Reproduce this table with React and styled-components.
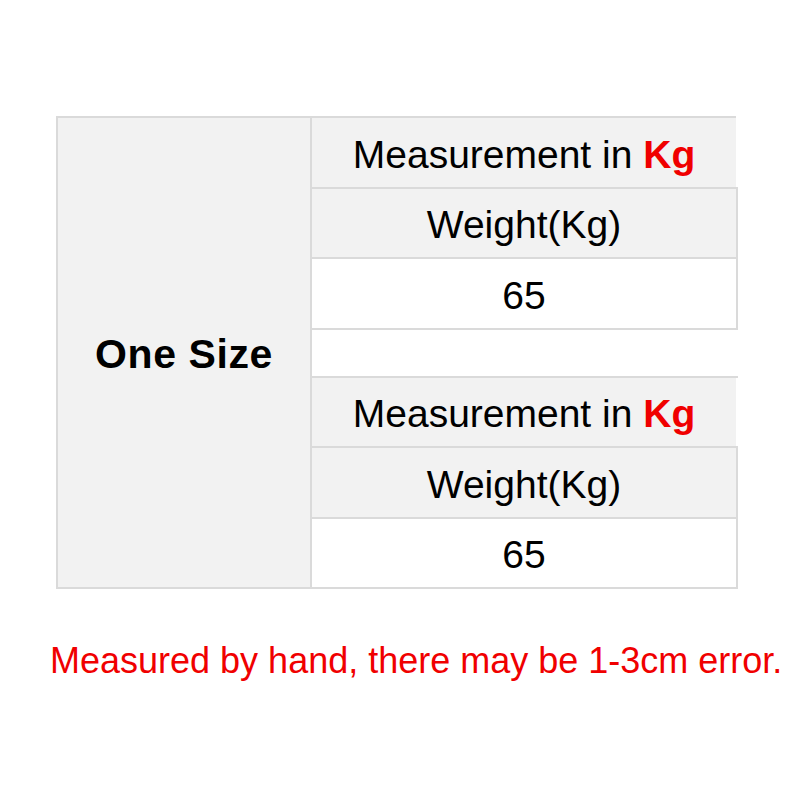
import React from 'react';
import styled, { createGlobalStyle } from 'styled-components';

const GlobalStyle = createGlobalStyle`
  html, body {
    margin: 0;
    padding: 0;
    background: #ffffff;
    font-family: "Liberation Sans", Arial, sans-serif;
  }
`;

const Page = styled.div`
  width: 800px;
  height: 800px;
  padding: 116px 0 0 56px;
  box-sizing: border-box;
`;

const SizeTable = styled.table`
  border-collapse: collapse;
  width: 682px;
  table-layout: fixed;
`;

const SizeCell = styled.td`
  width: 252px;
  background: #f2f2f2;
  border: 2px solid #dadada;
  text-align: center;
  font-size: 41px;
  font-weight: bold;
  letter-spacing: 0.6px;
  color: #000;
  padding: 4px 0 0;
`;

const Cell = styled.td`
  height: ${p => p.$h || 70.5}px;
  background: ${p => (p.$shade ? '#f2f2f2' : '#ffffff')};
  border-top: 2px solid #dadada;
  border-bottom: 2px solid #dadada;
  border-right: ${p => (p.$noRight ? '2px solid #ffffff' : '2px solid #dadada')};
  text-align: center;
  font-size: 39px;
  color: #000;
  padding: 5px 0 0;
  box-sizing: border-box;
`;

const Unit = styled.span`
  color: #f00000;
  font-weight: bold;
`;

const Note = styled.p`
  margin: 51px 0 0 -6px;
  font-size: 36px;
  color: #f00000;
  white-space: nowrap;
`;

const Block = () => (
  <>
    <tr>
      <Cell $shade $noRight>
        Measurement in <Unit>Kg</Unit>
      </Cell>
    </tr>
    <tr>
      <Cell $shade>Weight(Kg)</Cell>
    </tr>
    <tr>
      <Cell>65</Cell>
    </tr>
  </>
);

const App = () => (
  <Page>
    <GlobalStyle />
    <SizeTable>
      <tbody>
        <tr>
          <SizeCell rowSpan={8}>One Size</SizeCell>
          <Cell $shade $noRight>
            Measurement in <Unit>Kg</Unit>
          </Cell>
        </tr>
        <tr>
          <Cell $shade>Weight(Kg)</Cell>
        </tr>
        <tr>
          <Cell>65</Cell>
        </tr>
        <tr>
          <Cell $h={48} $noRight />
        </tr>
        <Block />
      </tbody>
    </SizeTable>
    <Note>Measured by hand, there may be 1-3cm error.</Note>
  </Page>
);

export default App;
